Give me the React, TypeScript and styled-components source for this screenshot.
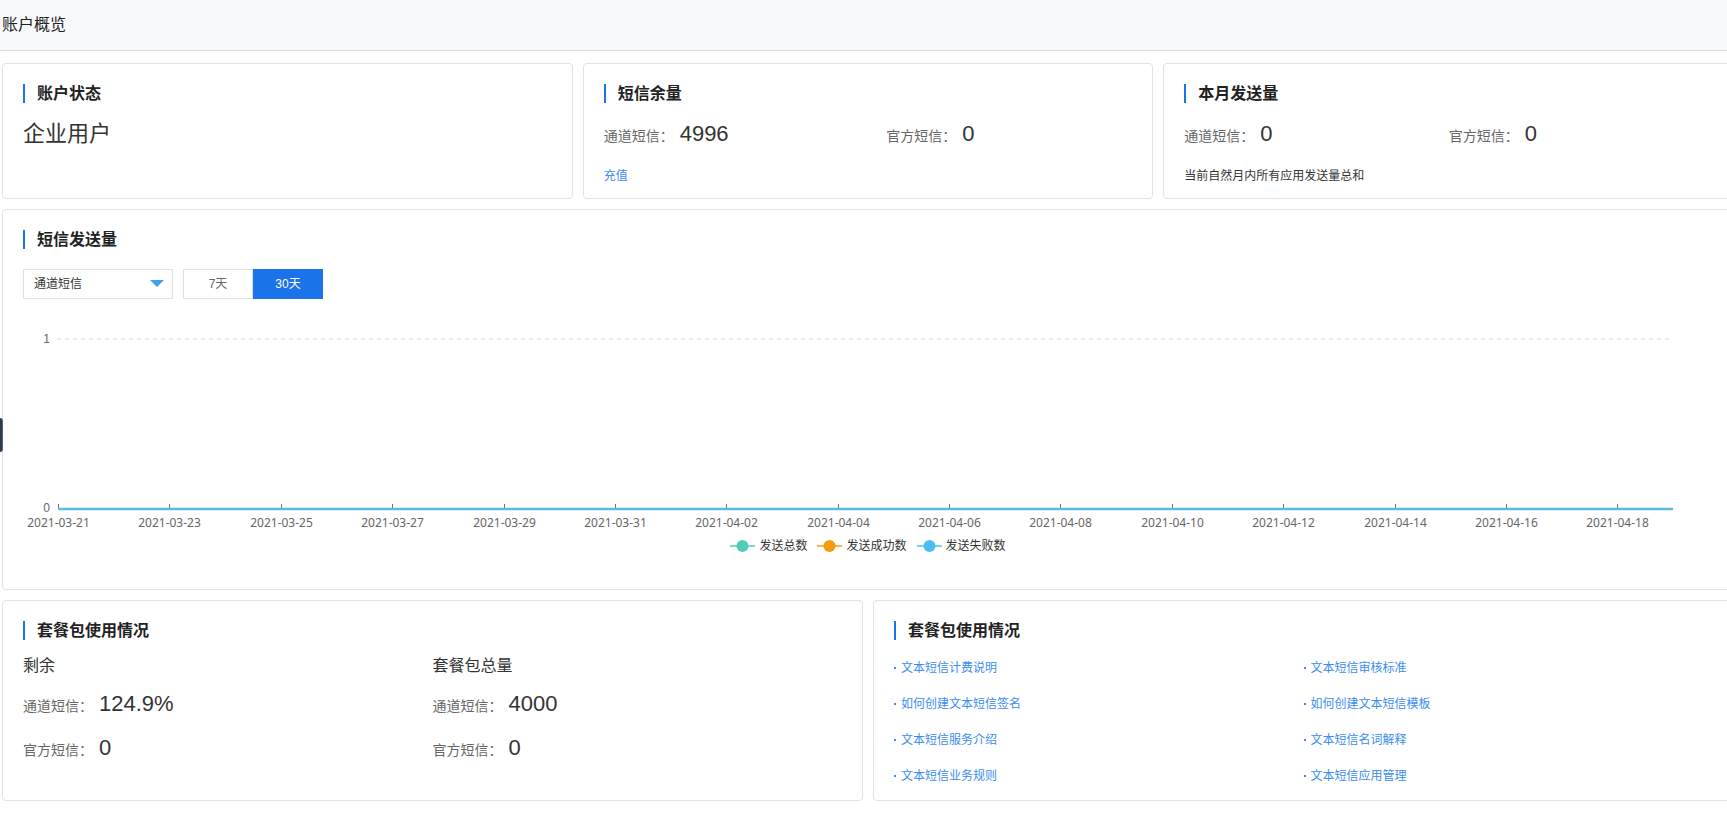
import React from "react";
import styled, { createGlobalStyle } from "styled-components";

const GlobalStyle = createGlobalStyle`
  html, body {
    margin: 0;
    padding: 0;
    background: #fff;
    overflow: hidden;
  }
  body {
    font-family: "Liberation Sans", "Noto Sans CJK SC", sans-serif;
    color: #333;
  }
  * { box-sizing: border-box; }
`;

const BLUE = "#1a73e8";
const LINK = "#3b8cf0";
const BORDER = "#dce3ea";

const Header = styled.header`
  height: 51px;
  background: #f8f9fb;
  border-bottom: 1px solid #d4d8de;
  display: flex;
  align-items: center;
  padding-left: 2px;
  font-size: 16px;
  line-height: 20px;
  color: #222;
`;

const Main = styled.main`
  width: 1732px;
  margin: 12px 0 0 2px;
  display: flex;
  flex-direction: column;
  gap: 10px;
`;

const Row = styled.div<{ $cols: number }>`
  display: grid;
  grid-template-columns: repeat(${(p) => p.$cols}, 1fr);
  gap: 10px;
`;

const Card = styled.section<{ $pb?: number }>`
  border: 1px solid ${BORDER};
  border-radius: 4px;
  background: #fff;
  padding: 20px 20px ${(p) => p.$pb ?? 13}px;
  min-width: 0;
`;

const ChartCard = styled.section`
  border: 1px solid ${BORDER};
  border-radius: 4px;
  background: #fff;
  padding: 20px 0 34px;
  height: 381px;
`;

const ChartHead = styled.div`
  padding: 0 20px;
`;

const CardTitle = styled.h3`
  margin: 0;
  height: 19px;
  border-left: 2px solid ${BLUE};
  padding-left: 12px;
  font-size: 16px;
  line-height: 19px;
  font-weight: 700;
  color: #222;
`;

const BigText = styled.div`
  margin-top: 16px;
  font-size: 22px;
  line-height: 30px;
  color: #333;
`;

const StatRow = styled.div`
  margin-top: 16px;
  display: flex;
  & > * {
    flex: 1 1 auto;
  }
`;

const Stat = styled.div<{ $mt?: number }>`
  display: flex;
  align-items: baseline;
  height: 30px;
  margin-top: ${(p) => p.$mt ?? 0}px;
`;

const StatLabel = styled.span`
  font-size: 14px;
  line-height: 30px;
  color: #666;
`;

const StatValue = styled.span`
  margin-left: 6px;
  font-size: 22px;
  line-height: 30px;
  color: #333;
`;

const TextLink = styled.a`
  display: block;
  margin-top: 18px;
  font-size: 12px;
  line-height: 18px;
  color: ${LINK};
  text-decoration: none;
  cursor: pointer;
`;

const Note = styled.div`
  margin-top: 18px;
  font-size: 12px;
  line-height: 18px;
  color: #333;
`;

const Controls = styled.div`
  margin-top: 20px;
  display: flex;
  gap: 10px;
  height: 30px;
`;

const Select = styled.div`
  width: 150px;
  height: 30px;
  border: 1px solid #dcdfe6;
  padding: 0 8px 0 10px;
  display: flex;
  align-items: center;
  justify-content: space-between;
  font-size: 12px;
  line-height: 18px;
  color: #333;
`;

const Segments = styled.div`
  display: flex;
  height: 30px;
`;

const SegButton = styled.button<{ $active?: boolean }>`
  width: 70px;
  height: 30px;
  padding: 0;
  font-family: inherit;
  font-size: 12px;
  line-height: 18px;
  border: 1px solid ${(p) => (p.$active ? BLUE : "#dcdfe6")};
  background: ${(p) => (p.$active ? BLUE : "#fff")};
  color: ${(p) => (p.$active ? "#fff" : "#666")};
  cursor: pointer;
`;

const ChartSvg = styled.svg`
  display: block;
  font-family: "Noto Sans", "Liberation Sans", sans-serif;
`;

const Legend = styled.div`
  height: 18px;
  display: flex;
  justify-content: center;
  align-items: center;
  gap: 10px;
`;

const LegendItem = styled.div`
  display: flex;
  align-items: center;
  gap: 4px;
  font-size: 12px;
  line-height: 18px;
  color: #333;
`;

const Columns = styled.div`
  display: grid;
  grid-template-columns: 1fr 1fr;
`;

const ColHead = styled.div`
  margin-top: 15px;
  font-size: 16px;
  line-height: 22px;
  color: #333;
`;

const DocGrid = styled.div`
  margin-top: 19px;
  display: grid;
  grid-template-columns: 1fr 1fr;
  row-gap: 18px;
`;

const DocLink = styled.a`
  display: flex;
  align-items: center;
  font-size: 12px;
  line-height: 18px;
  color: ${LINK};
  text-decoration: none;
  cursor: pointer;
  &::before {
    content: "";
    width: 2px;
    height: 2px;
    background: ${LINK};
    margin-right: 5px;
  }
`;

const SideTab = styled.div`
  position: fixed;
  left: -26px;
  top: 418px;
  width: 29px;
  height: 34px;
  border-radius: 3px;
  background: #2f3b4d;
  border-right: 1px solid #55627a;
`;

const X0 = 55;
const X1 = 1670;
const N = 30;
const STEP = (X1 - X0) / (N - 1);
const GRID_Y = 40;
const AXIS_Y = 210;

function dateLabel(i: number): string {
  const d = new Date(Date.UTC(2021, 2, 21 + i));
  const m = String(d.getUTCMonth() + 1).padStart(2, "0");
  const day = String(d.getUTCDate()).padStart(2, "0");
  return `${d.getUTCFullYear()}-${m}-${day}`;
}

const ticks = Array.from({ length: 15 }, (_, k) => k * 2);

const Chart: React.FC = () => (
  <ChartSvg width={1730} height={238} viewBox="0 0 1730 238">
    <line x1={X0 - 1} y1={GRID_Y} x2={X1 - 2} y2={GRID_Y} stroke="#dcdcdc" strokeDasharray="4 4" strokeWidth={1} />
    <text x={47} y={GRID_Y + 4} fontSize={12} fill="#666" textAnchor="end" fontFamily="Liberation Sans, sans-serif">1</text>
    <text x={47} y={AXIS_Y + 3} fontSize={12} fill="#666" textAnchor="end" fontFamily="Liberation Sans, sans-serif">0</text>
    {ticks.map((i) => {
      const x = Math.round(X0 + i * STEP) + 0.5;
      return (
        <g key={i}>
          <line x1={x} y1={AXIS_Y - 5} x2={x} y2={AXIS_Y} stroke="#6e7079" strokeWidth={1} />
          <text x={x} y={AXIS_Y + 18} fontSize={12} fill="#666" textAnchor="middle">
            {dateLabel(i)}
          </text>
        </g>
      );
    })}
    <line x1={X0} y1={AXIS_Y} x2={X1} y2={AXIS_Y} stroke="#56bfe0" strokeWidth={2.5} />
  </ChartSvg>
);

const LegendIcon: React.FC<{ color: string }> = ({ color }) => (
  <svg width={25} height={14} viewBox="0 0 25 14">
    <line x1={0} y1={7} x2={25} y2={7} stroke={color} strokeWidth={1.5} />
    <circle cx={12.5} cy={7} r={6} fill={color} />
  </svg>
);

const legend = [
  { name: "发送总数", color: "#50cdb4" },
  { name: "发送成功数", color: "#f39c12" },
  { name: "发送失败数", color: "#4dbef0" },
];

const docs = [
  "文本短信计费说明",
  "文本短信审核标准",
  "如何创建文本短信签名",
  "如何创建文本短信模板",
  "文本短信服务介绍",
  "文本短信名词解释",
  "文本短信业务规则",
  "文本短信应用管理",
];

export default function App() {
  return (
    <>
      <GlobalStyle />
      <Header>账户概览</Header>
      <SideTab />
      <Main>
        <Row $cols={3}>
          <Card>
            <CardTitle>账户状态</CardTitle>
            <BigText>企业用户</BigText>
          </Card>
          <Card>
            <CardTitle>短信余量</CardTitle>
            <StatRow>
              <Stat>
                <StatLabel>通道短信：</StatLabel>
                <StatValue>4996</StatValue>
              </Stat>
              <Stat>
                <StatLabel>官方短信：</StatLabel>
                <StatValue>0</StatValue>
              </Stat>
            </StatRow>
            <TextLink>充值</TextLink>
          </Card>
          <Card>
            <CardTitle>本月发送量</CardTitle>
            <StatRow>
              <Stat>
                <StatLabel>通道短信：</StatLabel>
                <StatValue>0</StatValue>
              </Stat>
              <Stat>
                <StatLabel>官方短信：</StatLabel>
                <StatValue>0</StatValue>
              </Stat>
            </StatRow>
            <Note>当前自然月内所有应用发送量总和</Note>
          </Card>
        </Row>

        <ChartCard>
          <ChartHead>
            <CardTitle>短信发送量</CardTitle>
            <Controls>
              <Select>
                <span>通道短信</span>
                <svg width={14} height={8} viewBox="0 0 14 8">
                  <path d="M0 0 L14 0 L7 7 Z" fill="#3ca2f0" />
                </svg>
              </Select>
              <Segments>
                <SegButton>7天</SegButton>
                <SegButton $active>30天</SegButton>
              </Segments>
            </Controls>
          </ChartHead>
          <Chart />
          <Legend>
            {legend.map((l) => (
              <LegendItem key={l.name}>
                <LegendIcon color={l.color} />
                <span>{l.name}</span>
              </LegendItem>
            ))}
          </Legend>
        </ChartCard>

        <Row $cols={2}>
          <Card $pb={15}>
            <CardTitle>套餐包使用情况</CardTitle>
            <Columns>
              <div>
                <ColHead>剩余</ColHead>
                <Stat $mt={12}>
                  <StatLabel>通道短信：</StatLabel>
                  <StatValue>124.9%</StatValue>
                </Stat>
                <Stat $mt={14}>
                  <StatLabel>官方短信：</StatLabel>
                  <StatValue>0</StatValue>
                </Stat>
              </div>
              <div>
                <ColHead>套餐包总量</ColHead>
                <Stat $mt={12}>
                  <StatLabel>通道短信：</StatLabel>
                  <StatValue>4000</StatValue>
                </Stat>
                <Stat $mt={14}>
                  <StatLabel>官方短信：</StatLabel>
                  <StatValue>0</StatValue>
                </Stat>
              </div>
            </Columns>
          </Card>
          <Card $pb={15}>
            <CardTitle>套餐包使用情况</CardTitle>
            <DocGrid>
              {docs.map((d) => (
                <DocLink key={d}>{d}</DocLink>
              ))}
            </DocGrid>
          </Card>
        </Row>
      </Main>
    </>
  );
}
